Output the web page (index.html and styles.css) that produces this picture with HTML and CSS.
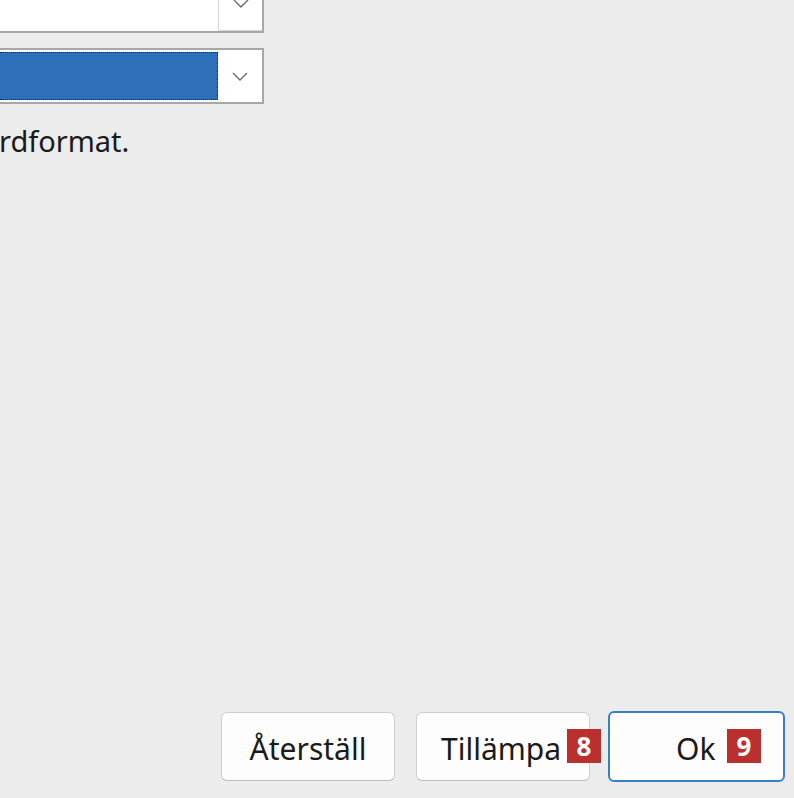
FILE: index.html
```html
<!DOCTYPE html>
<html lang="sv">
<head>
<meta charset="utf-8">
<link rel="stylesheet" href="styles.css">
</head>
<body>
<div class="dialog">
  <div class="combo combo-top">
    <div class="field"></div>
    <div class="drop">
      <svg class="chev chev-top" width="16" height="9" viewBox="0 0 16 9"><path d="M1 1 L8 8 L15 1" fill="none" stroke="#6a6a6a" stroke-width="1.4"/></svg>
    </div>
  </div>
  <div class="combo combo-sel">
    <div class="field selected"><div class="focus"></div></div>
    <div class="drop">
      <svg class="chev" width="16" height="9" viewBox="0 0 16 9"><path d="M1 1 L8 8 L15 1" fill="none" stroke="#6a6a6a" stroke-width="1.4"/></svg>
    </div>
  </div>
  <p class="note">rdformat.</p>
  <div class="buttons">
    <button class="btn">Återställ</button>
    <button class="btn">Tillämpa<span class="badge">8</span></button>
    <button class="btn primary">Ok<span class="badge">9</span></button>
  </div>
</div>
</body>
</html>
```
FILE: styles.css
```css
html, body {
  margin: 0;
  padding: 0;
  background: #ececec;
}
.dialog {
  width: 794px;
  height: 798px;
  display: flex;
  flex-direction: column;
  font-family: "Noto Sans", "Open Sans", sans-serif;
  color: #1a1a1a;
  overflow: hidden;
}
.combo {
  width: 264px;
  display: flex;
  border: 2px solid #a7a7a7;
  border-left: none;
  box-sizing: border-box;
  background: #fff;
}
.combo-top {
  height: 33px;
  border-top: none;
}
.combo-sel {
  margin-top: 15px;
  height: 56px;
}
.field {
  flex: 1;
  background: #fff;
  position: relative;
}
.field.selected {
  background: #2e6fba;
  margin: 2px 0 2px 0;
}
.focus {
  position: absolute;
  inset: 0;
  border: 1px dotted #1a1a1a;
  border-left: none;
}
.drop {
  width: 44px;
  background: #fff;
  display: flex;
  align-items: center;
  justify-content: center;
}
.combo-top .drop {
  border-left: 1px solid #d6d6d6;
  border-bottom: 1px solid #d6d6d6;
  align-items: flex-start;
  box-sizing: border-box;
}
.chev-top {
  margin-top: -1px;
}
.note {
  margin: 17px 0 0 -1px;
  font-size: 29px;
  line-height: 40px;
}
.buttons {
  margin-top: auto;
  margin-bottom: 16px;
  display: flex;
  gap: 21px;
  padding-left: 221px;
}
.btn {
  position: relative;
  width: 174px;
  height: 69px;
  box-sizing: border-box;
  background: #fdfdfd;
  border: 1px solid #cfcfcf;
  border-bottom-color: #bdbdbd;
  border-radius: 6px;
  font-family: "Noto Sans", "Open Sans", sans-serif;
  font-size: 30px;
  color: #1a1a1a;
  padding: 3px 0 0 0;
}
.btn:nth-child(2) {
  text-align: left;
  padding-left: 24px;
}
.btn.primary {
  width: 177px;
  margin-left: -3px;
  border: 2px solid #3a7fc6;
  margin-top: -1px;
  height: 71px;
  text-align: left;
  padding-left: 66px;
}
.badge {
  position: absolute;
  top: 16px;
  width: 34px;
  height: 34px;
  background: #b9302f;
  color: #fff;
  font-weight: bold;
  font-size: 26px;
  line-height: 34px;
  text-align: center;
}
.btn:nth-child(2) .badge {
  left: 150px;
}
.btn.primary .badge {
  left: 117px;
}
```
